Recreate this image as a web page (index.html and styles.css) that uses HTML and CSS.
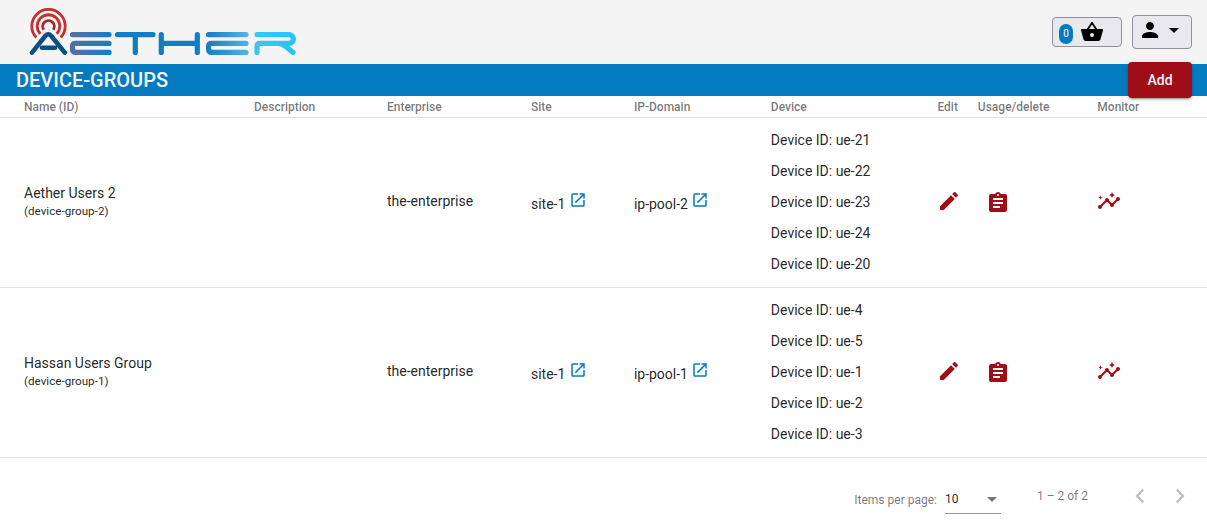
FILE: index.html
```html
<!DOCTYPE html>
<html lang="en">
<head>
<meta charset="utf-8">
<meta name="viewport" content="width=device-width, initial-scale=1">
<title>Aether - Device-Groups</title>
<link rel="stylesheet" href="styles.css">
</head>
<body>
<svg class="sprite" aria-hidden="true">
  <symbol id="i-open" viewBox="0 0 24 24"><path d="M19 19H5V5h7V3H5a2 2 0 0 0-2 2v14a2 2 0 0 0 2 2h14c1.1 0 2-.9 2-2v-7h-2v7zM14 3v2h3.590l-9.830 9.830 1.410 1.410L19 6.410V10h2V3h-7z"/></symbol>
  <symbol id="i-edit" viewBox="0 0 24 24"><path d="M3 17.250V21h3.750L17.810 9.940l-3.750-3.750L3 17.250zM20.710 7.040a1 1 0 0 0 0-1.410l-2.340-2.340a1 1 0 0 0-1.410 0l-1.830 1.830 3.750 3.750 1.830-1.830z"/></symbol>
  <symbol id="i-clip" viewBox="0 0 24 24"><path d="M19 3h-4.180C14.400 1.840 13.300 1 12 1s-2.400.840-2.820 2H5c-1.100 0-2 .9-2 2v14c0 1.100.9 2 2 2h14c1.100 0 2-.9 2-2V5c0-1.100-.9-2-2-2zm-7 0c.55 0 1 .45 1 1s-.45 1-1 1-1-.45-1-1 .45-1 1-1zm2 14H7v-2h7v2zm3-4H7v-2h10v2zm0-4H7V7h10v2z"/></symbol>
  <symbol id="i-insights" viewBox="0 0 24 24"><path d="M21 8c-1.450 0-2.260 1.440-1.930 2.510l-3.550 3.560c-.3-.09-.740-.09-1.040 0l-2.550-2.550C12.270 10.450 11.460 9 10 9c-1.450 0-2.270 1.440-1.930 2.520l-4.560 4.550C2.440 15.740 1 16.550 1 18c0 1.100.9 2 2 2 1.450 0 2.260-1.440 1.930-2.510l4.550-4.560c.3.090.740.090 1.040 0l2.550 2.550C12.730 16.550 13.540 18 15 18c1.450 0 2.270-1.440 1.930-2.520l3.560-3.550C21.560 12.260 23 11.450 23 10c0-1.100-.9-2-2-2z"/><path d="M15 9l.94-2.070L18 6l-2.060-.93L15 3l-.92 2.070L12 6l2.080.93zM3.500 11L4 9l2-.5L4 8l-.5-2L3 8l-2 .5L3 9z"/></symbol>
  <symbol id="i-basket" viewBox="0 0 24 24"><path d="M17.210 9l-4.380-6.560a1 1 0 0 0-1.660 0L6.790 9H2c-.55 0-1 .45-1 1 0 .09.010.180.040.270l2.540 9.270C3.810 20.380 4.580 21 5.500 21h13c.92 0 1.690-.62 1.930-1.460l2.540-9.270L23 10c0-.55-.45-1-1-1h-4.790zM9 9l3-4.400L15 9H9zm3 8c-1.100 0-2-.9-2-2s.9-2 2-2 2 .9 2 2-.9 2-2 2z"/></symbol>
  <symbol id="i-person" viewBox="0 0 24 24"><path d="M12 12c2.210 0 4-1.790 4-4s-1.790-4-4-4-4 1.790-4 4 1.790 4 4 4zm0 2c-2.670 0-8 1.340-8 4v2h16v-2c0-2.660-5.330-4-8-4z"/></symbol>
  <symbol id="i-drop" viewBox="0 0 24 24"><path d="M7 10l5 5 5-5z"/></symbol>
  <symbol id="i-prev" viewBox="0 0 24 24"><path d="M15.410 7.410L14 6l-6 6 6 6 1.410-1.410L10.830 12z"/></symbol>
  <symbol id="i-next" viewBox="0 0 24 24"><path d="M10 6L8.590 7.410 13.170 12l-4.580 4.590L10 18l6-6z"/></symbol>
</svg>

<header class="topbar">
  <a class="logo" href="#" aria-label="Aether">
    <svg width="268" height="48" viewBox="29 8 268 48" fill="none" stroke-linecap="round" stroke-linejoin="round">
      <defs>
        <linearGradient id="g-a" gradientUnits="userSpaceOnUse" x1="30" y1="0" x2="67" y2="0"><stop offset="0" stop-color="#0c5386"/><stop offset="1" stop-color="#0d4b7c"/></linearGradient>
        <linearGradient id="g-e" gradientUnits="userSpaceOnUse" x1="70" y1="0" x2="112" y2="0"><stop offset=".2" stop-color="#506fa5"/><stop offset="1" stop-color="#0d80c8"/></linearGradient>
        <linearGradient id="g-f" gradientUnits="userSpaceOnUse" x1="206" y1="0" x2="249" y2="0"><stop offset="0" stop-color="#147cbf"/><stop offset="1" stop-color="#56b4e6"/></linearGradient>
        <linearGradient id="g-r" gradientUnits="userSpaceOnUse" x1="254" y1="0" x2="296" y2="0"><stop offset="0" stop-color="#3fc4f5"/><stop offset="1" stop-color="#24c4fa"/></linearGradient>
      </defs>
      <g stroke="#c53030" stroke-width="2.800" stroke-linecap="butt">
        <path d="M36.300 37.500A16.700 16.700 0 1 1 60.700 37.500"/>
        <path d="M40.300 33.800A11.300 11.300 0 1 1 56.700 33.800"/>
        <path d="M43.800 29.800A5.800 5.800 0 1 1 53.200 29.800" stroke="#a92626"/>
      </g>
      <path d="M32 52.600L45.500 35.800Q48.300 32.800 51.100 35.800L64.800 52.600M42 47.800H55" stroke="url(#g-a)" stroke-width="4.600"/>
      <g stroke-width="5.200">
        <path d="M72.500 34.600H109M109 43.400H75.500Q72.500 43.400 72.500 46.500V49Q72.500 52.400 76 52.400H109" stroke="url(#g-e)"/>
        <path d="M117.500 34.600H153M135.300 34.600V52.400M161.300 34.600V52.400M197.300 34.600V52.400M161.300 43.400H197.300" stroke="#0f7dc4"/>
        <path d="M208.600 34.600H246M246 43.400H211.600Q208.600 43.400 208.600 46.500V49Q208.600 52.400 212 52.400H246" stroke="url(#g-f)"/>
        <path d="M257 34.600H289A4.400 4.400 0 0 1 289 43.400H260Q257 43.400 257 46.500V52.400M279 43.400Q283 43.800 286.500 47L293 52.400" stroke="url(#g-r)"/>
      </g>
    </svg>
  </a>
  <div class="actions">
    <button class="tool basket" type="button" aria-label="Basket"><span class="count">0</span><svg class="icon"><use href="#i-basket"/></svg></button>
    <button class="tool user" type="button" aria-label="Account"><svg class="icon"><use href="#i-person"/></svg><svg class="icon"><use href="#i-drop"/></svg></button>
  </div>
</header>

<main>
  <div class="titlebar">
    <h1>DEVICE-GROUPS</h1>
    <button class="add" type="button">Add</button>
  </div>
  <table class="groups">
    <colgroup><col class="c-name"><col class="c-desc"><col class="c-ent"><col class="c-site"><col class="c-ip"><col class="c-dev"><col class="c-edit"><col class="c-usage"><col class="c-mon"></colgroup>
    <thead>
      <tr><th>Name (ID)</th><th>Description</th><th>Enterprise</th><th>Site</th><th>IP-Domain</th><th>Device</th><th>Edit</th><th>Usage/delete</th><th>Monitor</th></tr>
    </thead>
    <tbody>
      <tr>
        <td class="raised">Aether Users 2<small>(device-group-2)</small></td>
        <td></td>
        <td class="raised">the-enterprise</td>
        <td>site-1 <a href="#" aria-label="Open site-1"><svg class="open"><use href="#i-open"/></svg></a></td>
        <td>ip-pool-2 <a href="#" aria-label="Open ip-pool-2"><svg class="open"><use href="#i-open"/></svg></a></td>
        <td><ul><li>Device ID: ue-21</li><li>Device ID: ue-22</li><li>Device ID: ue-23</li><li>Device ID: ue-24</li><li>Device ID: ue-20</li></ul></td>
        <td class="raised"><button class="act" type="button" aria-label="Edit"><svg class="icon"><use href="#i-edit"/></svg></button></td>
        <td><button class="act usage" type="button" aria-label="Usage/delete"><svg class="icon"><use href="#i-clip"/></svg></button></td>
        <td class="raised"><button class="act" type="button" aria-label="Monitor"><svg class="icon"><use href="#i-insights"/></svg></button></td>
      </tr>
      <tr>
        <td class="raised">Hassan Users Group<small>(device-group-1)</small></td>
        <td></td>
        <td class="raised">the-enterprise</td>
        <td>site-1 <a href="#" aria-label="Open site-1"><svg class="open"><use href="#i-open"/></svg></a></td>
        <td>ip-pool-1 <a href="#" aria-label="Open ip-pool-1"><svg class="open"><use href="#i-open"/></svg></a></td>
        <td><ul><li>Device ID: ue-4</li><li>Device ID: ue-5</li><li>Device ID: ue-1</li><li>Device ID: ue-2</li><li>Device ID: ue-3</li></ul></td>
        <td class="raised"><button class="act" type="button" aria-label="Edit"><svg class="icon"><use href="#i-edit"/></svg></button></td>
        <td><button class="act usage" type="button" aria-label="Usage/delete"><svg class="icon"><use href="#i-clip"/></svg></button></td>
        <td class="raised"><button class="act" type="button" aria-label="Monitor"><svg class="icon"><use href="#i-insights"/></svg></button></td>
      </tr>
    </tbody>
  </table>
  <nav class="paginator" aria-label="Pagination">
    <div class="size">
      <label for="page-size">Items per page:</label>
      <div class="select">
        <select id="page-size"><option>5</option><option selected>10</option><option>20</option></select>
        <svg class="icon"><use href="#i-drop"/></svg>
      </div>
    </div>
    <span class="range">1 – 2 of 2</span>
    <button class="page" type="button" aria-label="Previous page" disabled><svg class="chev"><use href="#i-prev"/></svg></button>
    <button class="page" type="button" aria-label="Next page" disabled><svg class="chev"><use href="#i-next"/></svg></button>
  </nav>
</main>
</body>
</html>
```

FILE: styles.css
```css
* { box-sizing: border-box; }

body {
  margin: 0;
  background: #fff;
  color: rgba(0, 0, 0, .87);
  font: 14px/20px Roboto, "Liberation Sans", sans-serif;
}

button, select { font: inherit; color: inherit; }
svg { fill: currentColor; }
.sprite { display: none; }
.icon { display: block; flex: none; width: 24px; height: 24px; }

.topbar {
  display: flex;
  align-items: center;
  justify-content: space-between;
  height: 64px;
  padding: 0 15px 0 29px;
  background: #f4f4f4;
}
.logo svg { display: block; fill: none; }
.actions { display: flex; align-items: center; gap: 10px; }

.tool {
  display: flex;
  align-items: center;
  border: 1px solid #8f8f9d;
  border-radius: 4px;
  background: #e9e9ed;
  color: #000;
}
.basket { width: 70px; height: 30px; gap: 7px; padding: 0 6px; }
.user { width: 60px; height: 34px; padding: 0 5px 4px; }
.count {
  width: 14px;
  margin-top: 4px;
  border-radius: 7px;
  background: #047bc1;
  color: #fff;
  font-size: 10px;
  line-height: 20px;
  text-align: center;
}

.titlebar {
  position: relative;
  padding: 0 16px;
  background: #047bc1;
}
.titlebar h1 {
  margin: 0;
  color: #f4f4f4;
  font-size: 20px;
  font-weight: 500;
  line-height: 32px;
}
.add {
  position: absolute;
  right: 15px;
  top: -2px;
  width: 64px;
  height: 36px;
  padding: 0;
  border: 0;
  border-radius: 4px;
  background: #9f0e17;
  color: #f4f4f4;
  font-weight: 500;
  box-shadow: 0 3px 1px -2px rgba(0, 0, 0, .2), 0 2px 2px rgba(0, 0, 0, .14), 0 1px 5px rgba(0, 0, 0, .12);
}

.groups {
  width: 100%;
  table-layout: fixed;
  border-collapse: separate;
  border-spacing: 0;
}
.c-name { width: 21.04%; }
.c-desc { width: 11.02%; }
.c-ent { width: 11.93%; }
.c-site { width: 8.53%; }
.c-ip { width: 11.35%; }
.c-dev { width: 13.8%; }
.c-edit { width: 3.35%; }
.c-usage { width: 9.9%; }
th, td {
  padding: 0;
  border-bottom: 1px solid rgba(0, 0, 0, .12);
  text-align: left;
  white-space: nowrap;
}
th {
  height: 22px;
  color: rgba(0, 0, 0, .54);
  font-size: 12px;
  font-weight: 500;
}
td { padding: 7px 0; }
td.raised { padding: 6px 0 9px; }
th:first-child, td:first-child { padding-left: 24px; }
small { display: block; font-size: smaller; line-height: 16px; }
ul { margin: 0; padding: 0; list-style: none; }
li { line-height: 31px; }
td a { color: #047bc1; }
.open { width: 18px; height: 18px; }
.act {
  display: block;
  padding: 0;
  border: 0;
  background: none;
  color: #9f0e17;
}
.usage { margin-left: 8px; }

.paginator {
  display: flex;
  align-items: center;
  justify-content: flex-end;
  padding: 18px 7px 0;
  color: rgba(0, 0, 0, .54);
  font-size: 12px;
}
.size { display: flex; align-items: center; gap: 8px; padding-top: 7px; }
.select { position: relative; width: 56px; }
.select select {
  display: block;
  width: 100%;
  height: 29px;
  padding: 0;
  border: 0;
  border-bottom: 1px solid rgba(0, 0, 0, .42);
  border-radius: 0;
  background: none;
  color: rgba(0, 0, 0, .87);
  appearance: none;
}
.select .icon { position: absolute; right: -3px; top: 2px; pointer-events: none; }
.range { margin: 0 32px 0 36px; }
.page {
  display: grid;
  place-items: center;
  width: 40px;
  height: 40px;
  padding: 0;
  border: 0;
  background: none;
  color: rgba(0, 0, 0, .26);
}
.chev { width: 28px; height: 28px; }
```
